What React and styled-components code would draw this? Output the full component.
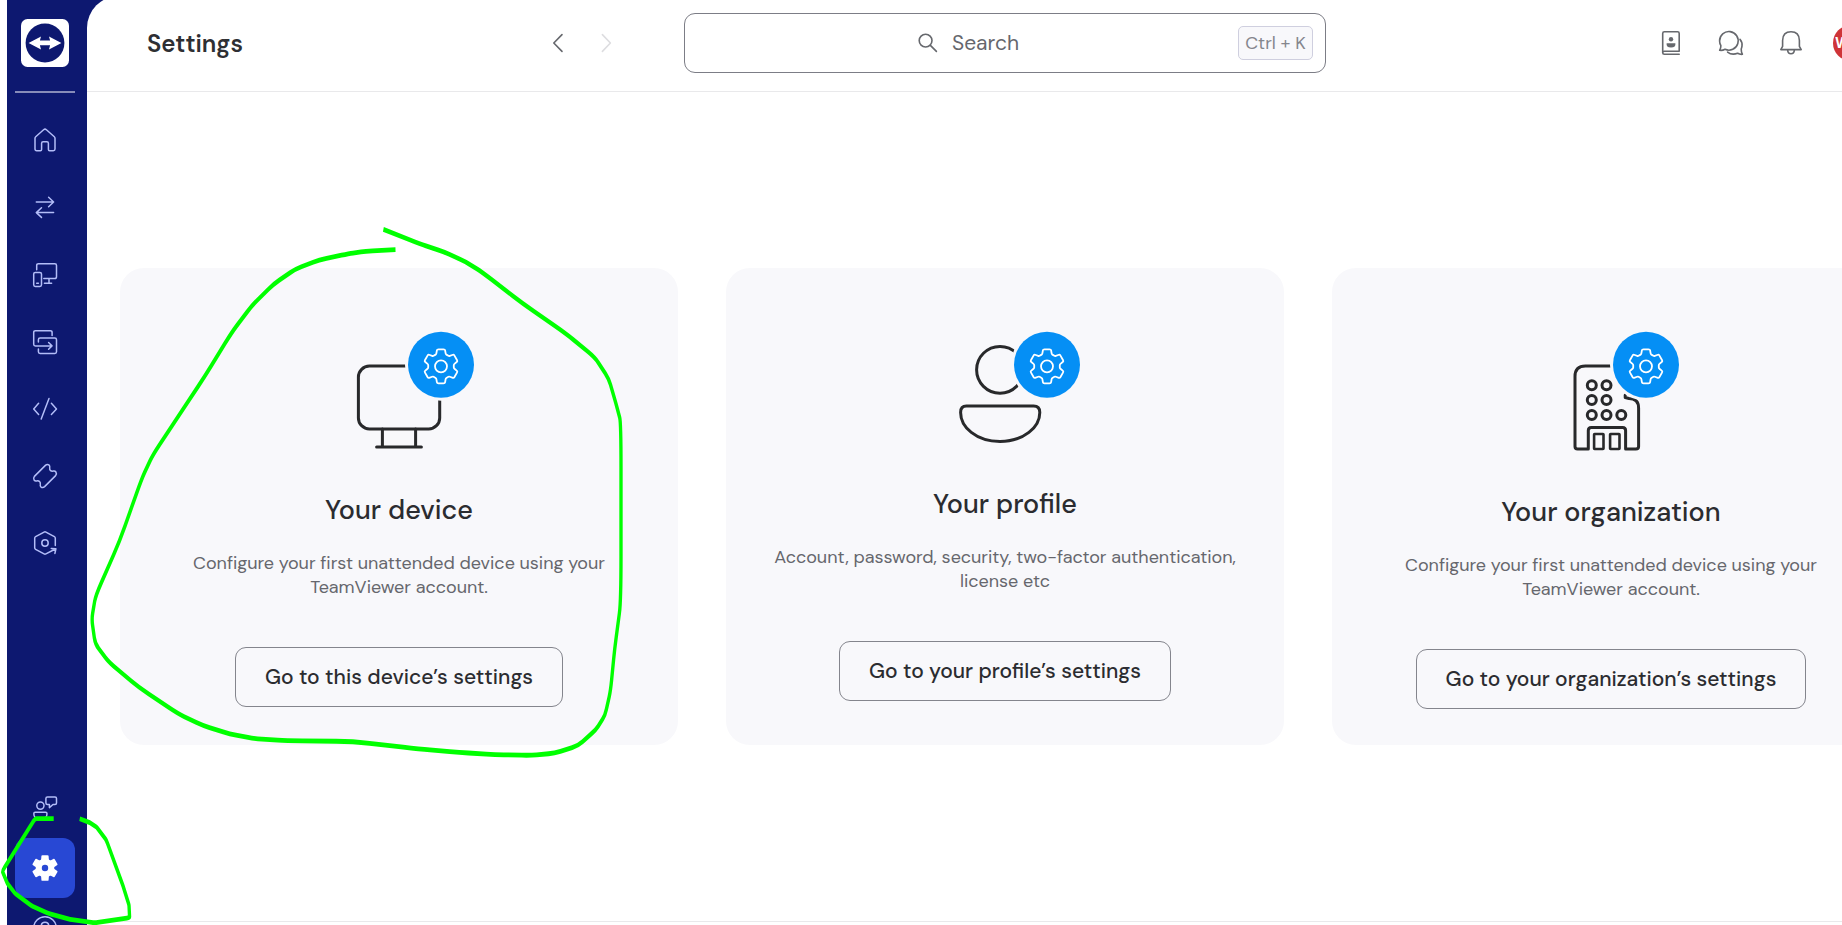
import React from "react";
import styled, { createGlobalStyle } from "styled-components";

const GlobalStyle = createGlobalStyle`
  * { box-sizing: border-box; }
  body { margin: 0; background: #fff; overflow: hidden; font-family: "DM Sans", Inter, "Liberation Sans", sans-serif; }
`;

const Shell = styled.div`
  position: relative;
  display: flex;
  width: 1842px;
  height: 925px;
  padding-left: 7px;
  overflow: hidden;
`;

const Workspace = styled.div`
  display: flex;
  flex: 1;
  min-width: 0;
  background: #0d1870;
`;

const Sidebar = styled.aside`
  display: flex;
  flex-direction: column;
  align-items: center;
  flex: none;
  width: 80px;
  padding: 19px 12px 0 8px;
  height: 925px;
  overflow: hidden;
`;

const Logo = styled.svg`
  flex: none;
  display: block;
  width: 48px;
  height: 48px;
`;

const Divider = styled.div`
  flex: none;
  width: 60px;
  height: 2px;
  margin-top: 24px;
  background: #878cb9;
`;

const NavGroup = styled.nav`
  display: flex;
  flex: none;
  flex-direction: column;
  gap: ${(p) => p.$gap}px;
  margin-top: ${(p) => p.$top}px;
`;

const NavItem = styled.div`
  display: flex;
  align-items: center;
  justify-content: center;
  width: 60px;
  height: 60px;
  border-radius: 12px;
  background: ${(p) => (p.$active ? "#2848d4" : "transparent")};
`;

const Glyph = styled.svg`
  flex: none;
  display: block;
  width: 24px;
  height: 24px;
  overflow: visible;
  fill: none;
  stroke: ${(p) => p.$color || "#b3bdf8"};
  stroke-width: ${(p) => p.$weight || 1.5};
  stroke-linecap: round;
  stroke-linejoin: round;
`;

const Main = styled.main`
  display: flex;
  flex-direction: column;
  flex: none;
  width: 1755px;
  height: 929px;
  margin-top: -4px;
  padding-top: 4px;
  background: #fff;
  border-top-left-radius: 32px;
  overflow: hidden;
`;

const Header = styled.header`
  display: flex;
  align-items: center;
  flex: none;
  height: 92px;
  padding: 0 0 6px 60px;
  border-bottom: 1px solid #e9e9eb;
`;

const PageTitle = styled.h1`
  flex: none;
  width: 399px;
  margin: 0;
  padding-top: 3px;
  color: #2e2f33;
  font-size: 24px;
  font-weight: 600;
  line-height: 28px;
`;

const History = styled.div`
  display: flex;
  flex: none;
  gap: 24px;
  margin-right: 66px;
`;

const SearchBox = styled.div`
  display: flex;
  align-items: center;
  flex: none;
  width: 642px;
  height: 60px;
  padding: 0 12px 0 231px;
  border: 1px solid #7c7d86;
  border-radius: 11px;
`;

const SearchLabel = styled.span`
  flex: 1;
  margin-left: 12px;
  color: #66676d;
  font-size: 21px;
  line-height: 26px;
`;

const Shortcut = styled.span`
  display: flex;
  align-items: center;
  justify-content: center;
  width: 75px;
  height: 34px;
  border: 1px solid #cfcfdf;
  border-radius: 5px;
  background: #f8f8fb;
  color: #85868d;
  font-size: 18px;
  white-space: nowrap;
`;

const Actions = styled.div`
  display: flex;
  align-items: center;
  flex: none;
  gap: 36px;
  margin-left: 333px;
`;

const Avatar = styled.div`
  flex: none;
  width: 36px;
  height: 36px;
  margin-left: -6px;
  padding-left: 2px;
  border-radius: 50%;
  background: #cf3438;
  color: #fff;
  font-size: 15px;
  font-weight: 700;
  line-height: 36px;
`;

const Content = styled.section`
  display: flex;
  flex: none;
  align-items: center;
  gap: 48px;
  height: 830px;
  padding: 0 33px;
  border-bottom: 1px solid #e9e9eb;
`;

const Card = styled.article`
  display: flex;
  flex-direction: column;
  align-items: center;
  justify-content: center;
  flex: none;
  width: 558px;
  height: 477px;
  border-radius: 24px;
  background: #f8f8fb;
`;

const Illustration = styled.svg`
  display: block;
  flex: none;
  fill: none;
  stroke: #28292b;
  stroke-width: 3;
  stroke-linecap: round;
  stroke-linejoin: round;
`;

const CardTitle = styled.h2`
  margin: 43px 0 0;
  color: #2b2c30;
  font-size: 27px;
  font-weight: 500;
  line-height: 36px;
  white-space: nowrap;
`;

const CardText = styled.p`
  display: flex;
  flex-direction: column;
  align-items: center;
  margin: 23px 0 0;
  color: #66676d;
  font-size: 18px;
  line-height: 24px;
  letter-spacing: -0.03px;
  font-variant-ligatures: common-ligatures;
  white-space: nowrap;
`;

const CardButton = styled.button`
  flex: none;
  width: ${(p) => p.$width}px;
  height: 60px;
  margin: 48px 0 0;
  padding: 0 0 1px;
  border: 1px solid #84858d;
  border-radius: 11px;
  background: transparent;
  color: #2b2c30;
  font-family: inherit;
  font-size: 21px;
  font-weight: 500;
  white-space: nowrap;
`;

const Ink = styled.svg`
  position: absolute;
  inset: 0;
  width: 1842px;
  height: 925px;
  pointer-events: none;
  fill: none;
  stroke: #00ff00;
  stroke-width: 4.8;
  stroke-linejoin: round;
`;

/* Closed outline of a six-toothed cog, with every corner eased by a curve. */
function cogPath(cx, cy, outer, inner, tip, base, ease) {
  const pts = [];
  for (let k = 0; k < 6; k++) {
    const a = ((-90 + 60 * k) * Math.PI) / 180;
    const at = (r, w) => [
      cx + r * Math.cos(a) - w * Math.sin(a),
      cy + r * Math.sin(a) + w * Math.cos(a),
    ];
    pts.push(at(inner, -base), at(outer, -tip), at(outer, tip), at(inner, base));
  }
  const mix = (p, q, t) => [p[0] + (q[0] - p[0]) * t, p[1] + (q[1] - p[1]) * t];
  const f = (p) => p.map((n) => n.toFixed(2)).join(" ");
  return (
    pts
      .map((p, i) => {
        const prev = pts[(i + pts.length - 1) % pts.length];
        const next = pts[(i + 1) % pts.length];
        return `${i ? "L" : "M"}${f(mix(p, prev, ease))} Q${f(p)} ${f(mix(p, next, ease))}`;
      })
      .join(" ") + "Z"
  );
}

/* Pen strokes use a nib narrower across than down. */
const NIB = 0.7;
function penPath(points, ease) {
  const p = points.map(([x, y]) => [x / NIB, y]);
  const f = (a, b) =>
    `${(a[0] + (b[0] - a[0]) * ease).toFixed(2)} ${(a[1] + (b[1] - a[1]) * ease).toFixed(2)}`;
  let d = `M${p[0][0]} ${p[0][1]}`;
  for (let i = 1; i < p.length - 1; i++) {
    d += ` L${f(p[i], p[i - 1])} Q${p[i][0].toFixed(2)} ${p[i][1]} ${f(p[i], p[i + 1])}`;
  }
  const last = p[p.length - 1];
  return `${d} L${last[0]} ${last[1]}`;
}

const bigLoop = [
  [395.5, 249.6], [365, 251.4], [349, 253.6], [319, 260], [295.5, 269], [273.7, 284], [252, 305.5],
  [232, 332], [204.5, 376.8], [178.8, 415.6], [153, 454.6], [142, 478], [119.5, 541.4],
  [95.6, 595.7], [91.7, 619], [95.2, 644], [109, 662.2], [138.7, 687.2], [178.2, 713.8],
  [202.6, 725.4], [230, 734], [254, 738.6], [285.6, 740.7], [352.8, 741.4], [420, 749],
  [459.6, 752.5], [495, 754.6], [530.8, 755.4], [554.5, 753.2], [578, 745.7], [596, 729.6],
  [605, 715.4], [610.6, 690.4], [614.6, 649.3], [621, 601], [621, 422.5], [615.8, 403],
  [608.7, 378.6], [595, 357.5], [566, 333.6], [522.9, 303.6], [481, 271.4], [465.5, 261.8],
  [443.8, 251.8], [420, 243.9], [383.4, 229.4],
];
const smallLoop = [
  [53.7, 818.7], [35, 818.7], [2.3, 871], [7.3, 883.3], [15, 893.3], [31.7, 906], [48.3, 913.3],
  [70, 919.3], [95, 922.8], [129.6, 917.6], [129, 905], [123.3, 886.7], [106.3, 840],
  [96.7, 827.3], [90, 822.7], [79.7, 818.7],
];

const HomeIcon = () => (
  <Glyph viewBox="0 0 24 24">
    <path d="M2 10.2Q2 9.3 2.7 8.7L10.6 1.7Q12 .5 13.4 1.7L21.3 8.7Q22 9.3 22 10.2V21Q22 22.7 20.3 22.7H16.6Q15.4 22.7 15.4 21.5V15.3Q15.4 13.8 13.9 13.8H10.1Q8.6 13.8 8.6 15.3V21.5Q8.6 22.7 7.4 22.7H3.7Q2 22.7 2 21Z" />
  </Glyph>
);
const ArrowsIcon = () => (
  <Glyph viewBox="0 0 24 24">
    <path d="M3.3 7H20.6M15.6 2.3 20.6 7 15.6 11.7M20.6 17.6H3.3M8.5 12.8 3.3 17.6 8.5 22.4" />
  </Glyph>
);
const DevicesIcon = () => (
  <Glyph viewBox="0 0 24 24">
    <path d="M3.7 6.8V2.4Q3.7.7 5.4.7H21.8Q23.5.7 23.5 2.4V13.8Q23.5 15.6 21.8 15.6H10.8M16 15.6V20.2M11.4 20.2H18.6M3.7 20.2H5.4" />
    <rect x=".7" y="9.4" width="7.8" height="14" rx="1.6" />
  </Glyph>
);
const TransferIcon = () => (
  <Glyph viewBox="0 0 24 24">
    <path d="M19.1 5.5V2.4Q19.1.7 17.4.7H2.4Q.7.7.7 2.4V14.2Q.7 15.9 2.4 15.9H18.6M15.6 12.5 19 15.9 15.6 19.3M5.4 12V9.7Q5.4 8 7.1 8H21.8Q23.5 8 23.5 9.7V21.7Q23.5 23.4 21.8 23.4H7.1Q5.4 23.4 5.4 21.7V19" />
  </Glyph>
);
const CodeIcon = () => (
  <Glyph viewBox="0 0 24 24">
    <path d="M5.6 6.3.7 11.9 5.6 17.4M18.4 6.3 23.5 11.9 18.4 17.4M16 1.5 8.2 22" />
  </Glyph>
);
const TicketIcon = () => (
  <Glyph viewBox="0 0 24 24">
    <path d="M1.4 12.4 12.4 1.4Q14.2-.3 16.2 1.2Q17 2 16.7 3.6Q16.4 5.8 17.6 6.6Q18.6 7.5 20.3 7.1Q22 6.7 22.9 8Q24 9.8 22.6 11.6L11.6 22.6Q9.8 24.3 7.8 22.8Q7 22 7.3 20.4Q7.6 18.2 6.4 17.4Q5.4 16.5 3.7 16.9Q2 17.3 1.1 16Q0 14.2 1.4 12.4Z" />
  </Glyph>
);
const HexIcon = () => (
  <Glyph viewBox="0 0 24 24">
    <path d="M22.3 14.4V7.2Q22.3 6.2 21.4 5.7L12.9 1.1Q12 .6 11.1 1.1L2.6 5.7Q1.7 6.2 1.7 7.2V16.8Q1.7 17.8 2.6 18.3L11.1 22.9Q12 23.4 12.9 22.9L22.4 18M18.2 17.4 22.9 17.8 21.9 22.4" />
    <circle cx="12" cy="12" r="3.2" />
  </Glyph>
);
const SupportIcon = () => (
  <Glyph viewBox="0 0 24 24">
    <circle cx="7.4" cy="9.6" r="3.6" />
    <path d="M2.2 16.3H12.6Q14 16.3 14 17.8Q14 23.3 7.4 23.3Q.8 23.3.8 17.8Q.8 16.3 2.2 16.3ZM14.4.9H22Q23.5.9 23.5 2.4V7Q23.5 8.5 22 8.5H20L16.4 11.6V8.5H14.4Q12.9 8.5 12.9 7V2.4Q12.9.9 14.4.9Z" />
  </Glyph>
);
const SolidCogIcon = () => (
  <Glyph viewBox="0 0 24 24">
    <path
      d={`${cogPath(12, 12, 12.8, 8.4, 3.5, 3.9, 0.15)} M15.2 12A3.2 3.2 0 1 0 8.8 12A3.2 3.2 0 1 0 15.2 12Z`}
      fill="#fff"
      fillRule="evenodd"
      stroke="none"
    />
  </Glyph>
);
const HelpIcon = () => (
  <Glyph viewBox="0 0 24 24">
    <circle cx="12" cy="12" r="11.3" />
    <path d="M8.3 9.8Q8.3 6.2 12 6.2Q15.7 6.2 15.7 9.6Q15.7 11.5 12 13.5" />
  </Glyph>
);

const INK = "#66686d";

const BadgeCog = ({ x }) => (
  <g>
    <circle cx={x} cy="33.7" r="36" fill="#f8f8fb" stroke="none" />
    <circle cx={x} cy="33.7" r="33" fill="#058ff5" stroke="none" />
    <path d={cogPath(x, 35.3, 17, 12, 3.9, 4.8, 0.18)} stroke="#fff" strokeWidth="1.8" />
    <circle cx={x} cy="35.3" r="6" stroke="#fff" strokeWidth="1.8" />
  </g>
);

const DeviceArt = () => (
  <Illustration width="160" height="143" viewBox="-80 -25 160 143">
    <rect x="-40.6" y="35.1" width="81.3" height="62.8" rx="11" />
    <path d="M-16.6 98V116M16.6 98V116M-22.4 116H22.4" />
    <BadgeCog x={42} />
  </Illustration>
);
const ProfileArt = () => (
  <Illustration width="160" height="131" viewBox="-80 -19 160 131">
    <circle cx="-5" cy="38.8" r="23.4" />
    <path d="M-38.6 75.1H28.6Q34.8 75.1 34.8 81.4C34.8 96 19 110.4-5 110.4C-29 110.4-44.4 96-44.4 81.4Q-44.4 75.1-38.6 75.1Z" />
    <BadgeCog x={42} />
  </Illustration>
);
const windows = [
  [-19.2, 54.2], [-4.5, 54.2],
  [-19.2, 69], [-4.5, 69],
  [-19.2, 84], [-4.5, 84], [10.3, 84],
];
const OrganizationArt = () => (
  <Illustration width="140" height="147" viewBox="-70 -27 140 147">
    <path d="M0 35.1H-25.6Q-36 35.1-36 45.5V115.4Q-36 118-33.4 118H-22.7V99.6Q-22.7 96.6-19.7 96.6H11.6Q14.6 96.6 14.6 99.6V118H24.9Q27.6 118 27.6 115.4V77Q27.6 67.5 18 67.5L14.2 66.5V64" />
    {windows.map(([cx, cy]) => (
      <circle key={`${cx}:${cy}`} cx={cx} cy={cy} r="4.5" />
    ))}
    <rect x="-16.9" y="103" width="9.4" height="15" rx="0.5" strokeWidth="2.6" />
    <rect x="-0.9" y="103" width="9.4" height="15" rx="0.5" strokeWidth="2.6" />
    <BadgeCog x={35} />
  </Illustration>
);

const cards = [
  {
    Art: DeviceArt,
    title: "Your device",
    lines: ["Configure your first unattended device using your", "TeamViewer account."],
    action: "Go to this device’s settings",
    width: 328,
  },
  {
    Art: ProfileArt,
    title: "Your profile",
    lines: ["Account, password, security, two-factor authentication,", "license etc"],
    action: "Go to your profile’s settings",
    width: 332,
  },
  {
    Art: OrganizationArt,
    title: "Your organization",
    lines: ["Configure your first unattended device using your", "TeamViewer account."],
    action: "Go to your organization’s settings",
    width: 390,
  },
];

export default function App() {
  return (
    <>
      <GlobalStyle />
      <Shell>
        <Workspace>
          <Sidebar>
            <Logo viewBox="0 0 48 48">
              <rect width="48" height="48" rx="6.5" fill="#fff" />
              <circle cx="24" cy="24" r="19.4" fill="#0d1870" />
              <path d="M7.6 24 20 17.4 18.9 21.6H29.1L28 17.4 40.4 24 28 30.5 29.1 26.3H18.9L20 30.5Z" fill="#fff" />
            </Logo>
            <Divider />
            <NavGroup $gap={7.2} $top={17.3}>
              <NavItem><HomeIcon /></NavItem>
              <NavItem><ArrowsIcon /></NavItem>
              <NavItem><DevicesIcon /></NavItem>
              <NavItem><TransferIcon /></NavItem>
              <NavItem><CodeIcon /></NavItem>
              <NavItem><TicketIcon /></NavItem>
              <NavItem><HexIcon /></NavItem>
            </NavGroup>
            <NavGroup $gap={0} $top={204.5}>
              <NavItem><SupportIcon /></NavItem>
              <NavItem $active><SolidCogIcon /></NavItem>
              <NavItem><HelpIcon /></NavItem>
            </NavGroup>
          </Sidebar>
          <Main>
            <Header>
              <PageTitle>Settings</PageTitle>
              <History>
                <Glyph viewBox="0 0 24 24" $color={INK} $weight={1.6}><path d="M16 3.6 7.8 12 16 20.4" /></Glyph>
                <Glyph viewBox="0 0 24 24" $color="#dddde0" $weight={1.6}><path d="M8.4 3.6 16.4 12 8.4 20.4" /></Glyph>
              </History>
              <SearchBox>
                <Glyph viewBox="0 0 24 24" $color={INK} $weight={1.6}><circle cx="9.6" cy="9.6" r="6.4" /><path d="M14.4 14.4 20.4 20.4" /></Glyph>
                <SearchLabel>Search</SearchLabel>
                <Shortcut>Ctrl + K</Shortcut>
              </SearchBox>
              <Actions>
                <Glyph viewBox="0 0 24 24" $color={INK} $weight={1.6}>
                  <path d="M20.2 23.3H5.4Q3.7 23.3 3.7 21.7V2.4Q3.7.8 5.4.8H18.6Q20.2.8 20.2 2.4V20.3H5.4Q3.7 20.3 3.7 21.7" />
                  <circle cx="12" cy="8.2" r="2.2" fill={INK} stroke="none" />
                  <path d="M7.6 12.2H16.4Q17 16.4 12 16.4Q7 16.4 7.6 12.2Z" fill={INK} stroke="none" />
                </Glyph>
                <Glyph viewBox="0 0 24 24" $color={INK} $weight={1.6}>
                  <path d="M.7 19.3Q1.9 17.4 1.9 14.6Q.6 12.6.6 10A9.3 9.3 0 1 1 6 18.3Q3.4 19.8.7 19.3Z" />
                  <path d="M21 8.4Q23.6 11.3 23 15Q22.7 17 22.2 18Q22.2 21.4 23.4 23.3Q20.6 23.5 18.6 22.3Q12.8 24.5 8.6 21.1" />
                </Glyph>
                <Glyph viewBox="0 0 24 24" $color={INK} $weight={1.6}>
                  <path d="M3.6 15.4V9.4Q3.8.8 12 .8Q20.2.8 20.4 9.4V15.4L22.2 18.6H1.8ZM8.6 19Q8.9 22.8 12 22.8Q15.1 22.8 15.4 19" />
                </Glyph>
                <Avatar>W</Avatar>
              </Actions>
            </Header>
            <Content>
              {cards.map(({ Art, title, lines, action, width }) => (
                <Card key={title}>
                  <Art />
                  <CardTitle>{title}</CardTitle>
                  <CardText>
                    {lines.map((text) => (
                      <span key={text}>{text}</span>
                    ))}
                  </CardText>
                  <CardButton $width={width}>{action}</CardButton>
                </Card>
              ))}
            </Content>
          </Main>
        </Workspace>
        <Ink viewBox="0 0 1842 925">
          <g transform={`scale(${NIB} 1)`}>
            <path d={penPath(bigLoop, 0.25)} />
            <path d={penPath(smallLoop, 0.08)} />
          </g>
        </Ink>
      </Shell>
    </>
  );
}
